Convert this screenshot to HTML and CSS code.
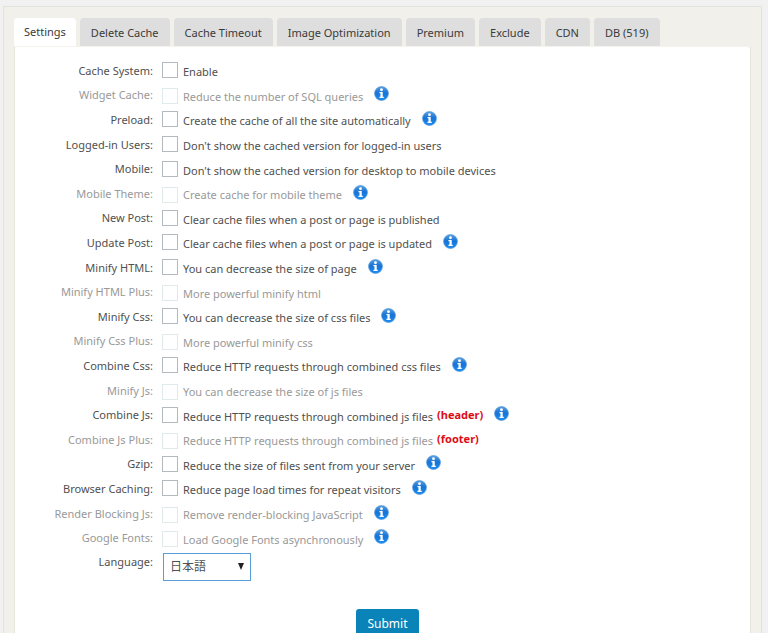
FILE: index.html
```html
<!DOCTYPE html>
<html lang="en">
<head>
<meta charset="utf-8">
<title>Cache Settings</title>
<link rel="stylesheet" href="styles.css">
</head>
<body>
<svg class="defs" aria-hidden="true">
  <defs>
    <linearGradient id="ball" x1="0" y1="0" x2="0" y2="1">
      <stop offset="0" stop-color="#5a9fdf"/>
      <stop offset="0.45" stop-color="#1673d6"/>
      <stop offset="1" stop-color="#1a8cf2"/>
    </linearGradient>
    <symbol id="info" viewBox="0 0 16 16">
      <circle cx="8" cy="8" r="7.4" fill="url(#ball)" stroke="#5a9bdb" stroke-width="0.8"/>
      <circle cx="8" cy="4" r="1.5" fill="#fff"/>
      <path d="M5.8 6.5h3.5v5h1.1v1.2H5.8v-1.2h1.1V7.7H5.8z" fill="#fff"/>
    </symbol>
  </defs>
</svg>
<main class="panel">
  <nav class="tabs" role="tablist">
    <button class="tab active" role="tab" aria-selected="true">Settings</button>
    <button class="tab" role="tab">Delete Cache</button>
    <button class="tab" role="tab">Cache Timeout</button>
    <button class="tab" role="tab">Image Optimization</button>
    <button class="tab" role="tab">Premium</button>
    <button class="tab" role="tab">Exclude</button>
    <button class="tab" role="tab">CDN</button>
    <button class="tab" role="tab">DB (519)</button>
  </nav>
  <form class="content">
    <div class="rows">
      <div class="row"><label class="name" for="c1">Cache System:</label><input type="checkbox" id="c1"><label class="text" for="c1">Enable</label></div>
      <div class="row off"><label class="name" for="c2">Widget Cache:</label><input type="checkbox" id="c2" disabled><label class="text" for="c2">Reduce the number of SQL queries</label><svg class="info"><use href="#info"/></svg></div>
      <div class="row"><label class="name" for="c3">Preload:</label><input type="checkbox" id="c3"><label class="text" for="c3">Create the cache of all the site automatically</label><svg class="info"><use href="#info"/></svg></div>
      <div class="row"><label class="name" for="c4">Logged-in Users:</label><input type="checkbox" id="c4"><label class="text" for="c4">Don't show the cached version for logged-in users</label></div>
      <div class="row"><label class="name" for="c5">Mobile:</label><input type="checkbox" id="c5"><label class="text" for="c5">Don't show the cached version for desktop to mobile devices</label></div>
      <div class="row off"><label class="name" for="c6">Mobile Theme:</label><input type="checkbox" id="c6" disabled><label class="text" for="c6">Create cache for mobile theme</label><svg class="info"><use href="#info"/></svg></div>
      <div class="row"><label class="name" for="c7">New Post:</label><input type="checkbox" id="c7"><label class="text" for="c7">Clear cache files when a post or page is published</label></div>
      <div class="row"><label class="name" for="c8">Update Post:</label><input type="checkbox" id="c8"><label class="text" for="c8">Clear cache files when a post or page is updated</label><svg class="info"><use href="#info"/></svg></div>
      <div class="row"><label class="name" for="c9">Minify HTML:</label><input type="checkbox" id="c9"><label class="text" for="c9">You can decrease the size of page</label><svg class="info"><use href="#info"/></svg></div>
      <div class="row off"><label class="name" for="c10">Minify HTML Plus:</label><input type="checkbox" id="c10" disabled><label class="text" for="c10">More powerful minify html</label></div>
      <div class="row"><label class="name" for="c11">Minify Css:</label><input type="checkbox" id="c11"><label class="text" for="c11">You can decrease the size of css files</label><svg class="info"><use href="#info"/></svg></div>
      <div class="row off"><label class="name" for="c12">Minify Css Plus:</label><input type="checkbox" id="c12" disabled><label class="text" for="c12">More powerful minify css</label></div>
      <div class="row"><label class="name" for="c13">Combine Css:</label><input type="checkbox" id="c13"><label class="text" for="c13">Reduce HTTP requests through combined css files</label><svg class="info"><use href="#info"/></svg></div>
      <div class="row off"><label class="name" for="c14">Minify Js:</label><input type="checkbox" id="c14" disabled><label class="text" for="c14">You can decrease the size of js files</label></div>
      <div class="row"><label class="name" for="c15">Combine Js:</label><input type="checkbox" id="c15"><label class="text" for="c15">Reduce HTTP requests through combined js files</label><b class="place">(header)</b><svg class="info"><use href="#info"/></svg></div>
      <div class="row off"><label class="name" for="c16">Combine Js Plus:</label><input type="checkbox" id="c16" disabled><label class="text" for="c16">Reduce HTTP requests through combined js files</label><b class="place">(footer)</b></div>
      <div class="row"><label class="name" for="c17">Gzip:</label><input type="checkbox" id="c17"><label class="text" for="c17">Reduce the size of files sent from your server</label><svg class="info"><use href="#info"/></svg></div>
      <div class="row"><label class="name" for="c18">Browser Caching:</label><input type="checkbox" id="c18"><label class="text" for="c18">Reduce page load times for repeat visitors</label><svg class="info"><use href="#info"/></svg></div>
      <div class="row off"><label class="name" for="c19">Render Blocking Js:</label><input type="checkbox" id="c19" disabled><label class="text" for="c19">Remove render-blocking JavaScript</label><svg class="info"><use href="#info"/></svg></div>
      <div class="row off"><label class="name" for="c20">Google Fonts:</label><input type="checkbox" id="c20" disabled><label class="text" for="c20">Load Google Fonts asynchronously</label><svg class="info"><use href="#info"/></svg></div>
    </div>
    <div class="row language">
      <label class="name" for="lang">Language:</label>
      <span class="picker">
        <select id="lang"><option lang="ja">日本語</option></select>
        <svg class="arrow" viewBox="0 0 6 7" aria-hidden="true"><path d="M0 0h6L3 7z"/></svg>
      </span>
    </div>
    <div class="actions"><button class="submit" type="submit">Submit</button></div>
  </form>
</main>
</body>
</html>
```
FILE: styles.css
```css
* {
  box-sizing: border-box;
}

body {
  margin: 0;
  height: 100vh;
  padding: 6px 6px 0 3px;
  overflow: hidden;
  background: #f1f1f1;
  color: #505050;
  font: 11px/16px "Noto Sans", "Open Sans", "Noto Sans CJK JP", sans-serif;
}

button,
select {
  font: inherit;
  color: inherit;
}

.defs {
  position: absolute;
  width: 0;
  height: 0;
}

.panel {
  padding: 11px 10px;
  border: 1px solid #e3e3de;
  background: #f1f0eb;
}

.tabs {
  display: flex;
  gap: 4px;
}

.tab {
  height: 28px;
  padding: 1px 11px 0;
  border: 0;
  border-radius: 4px 4px 0 0;
  background: #dedede;
  color: #3a3a3a;
  white-space: nowrap;
}

.tab.active {
  padding: 0 10px;
  background: #fff;
}

.content {
  padding: 12px 0 20px;
  border: 1px solid #e6e5dc;
  border-top-color: #f4f3ee;
  border-radius: 0 4px 4px 4px;
  background: #fff;
}

.rows {
  display: grid;
  grid-auto-rows: 1fr;
  height: 492px;
}

.row {
  display: flex;
  align-items: center;
}

.name {
  width: 138px;
  margin-right: 9px;
  padding-bottom: 1px;
  text-align: right;
  white-space: nowrap;
}

.off {
  color: #999;
}

input {
  appearance: none;
  flex: none;
  width: 16px;
  height: 16px;
  margin: 0 5px 2px 0;
  border: 1px solid #b4b9be;
  background: #fff;
}

.off input {
  margin-top: 1px;
  margin-bottom: 0;
  border-color: #e0eaea;
}

.text {
  padding-top: 2px;
  white-space: nowrap;
}

.place {
  margin-left: 4px;
  padding-bottom: 2px;
  color: #de0b14;
}

.info {
  flex: none;
  width: 15px;
  height: 15px;
  margin: 0 0 4px 11px;
}

.language {
  align-items: flex-start;
  padding-top: 2px;
}

.language .name {
  padding-top: 1px;
  margin-right: 10px;
}

.picker {
  position: relative;
}

select {
  display: block;
  appearance: none;
  width: 88px;
  height: 28px;
  padding: 0 6px;
  border: 1px solid #5b9dd9;
  border-radius: 0;
  background: #fff;
  font-size: 12px;
}

.arrow {
  position: absolute;
  top: 10px;
  right: 7px;
  width: 6px;
  height: 7px;
  fill: #222;
  pointer-events: none;
}

.actions {
  display: flex;
  justify-content: center;
  margin-top: 28px;
  padding-left: 10px;
}

.submit {
  height: 29px;
  padding: 0 11px;
  border: 0;
  border-radius: 3px;
  background: #0a83b8;
  color: #fff;
  font-size: 12px;
}
```
